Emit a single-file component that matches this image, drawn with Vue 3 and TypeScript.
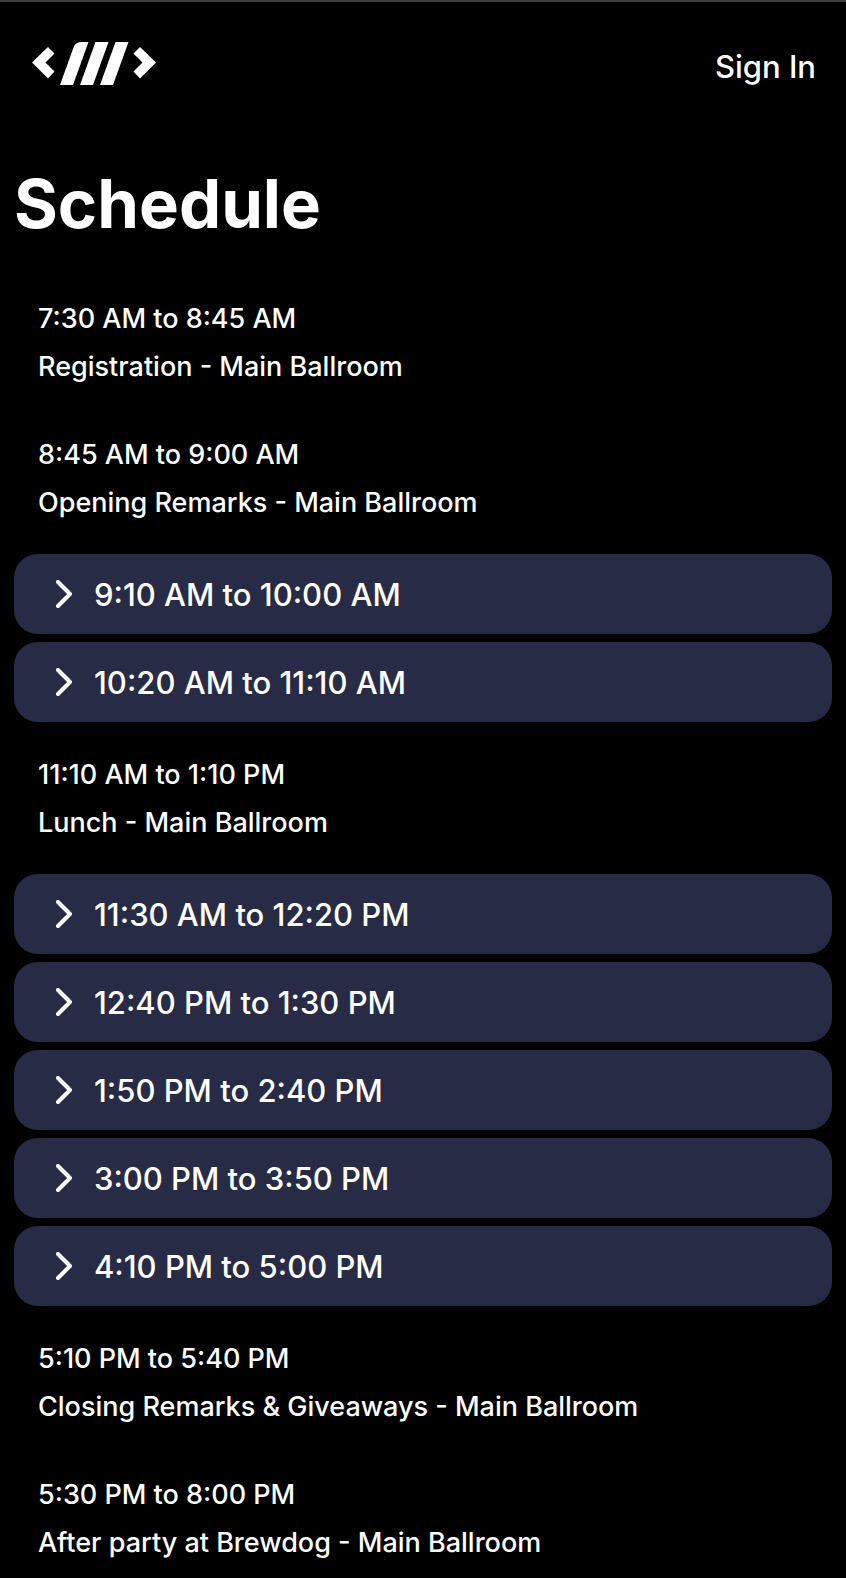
<script setup lang="ts">
import { ref } from 'vue'

interface Slot {
  time: string
  title?: string
}

interface Block {
  kind: 'event' | 'sessions'
  slots: Slot[]
}

const blocks: Block[] = [
  {
    kind: 'event',
    slots: [
      { time: '7:30 AM to 8:45 AM', title: 'Registration - Main Ballroom' },
      { time: '8:45 AM to 9:00 AM', title: 'Opening Remarks - Main Ballroom' },
    ],
  },
  { kind: 'sessions', slots: [{ time: '9:10 AM to 10:00 AM' }, { time: '10:20 AM to 11:10 AM' }] },
  { kind: 'event', slots: [{ time: '11:10 AM to 1:10 PM', title: 'Lunch - Main Ballroom' }] },
  {
    kind: 'sessions',
    slots: [
      { time: '11:30 AM to 12:20 PM' },
      { time: '12:40 PM to 1:30 PM' },
      { time: '1:50 PM to 2:40 PM' },
      { time: '3:00 PM to 3:50 PM' },
      { time: '4:10 PM to 5:00 PM' },
    ],
  },
  {
    kind: 'event',
    slots: [
      { time: '5:10 PM to 5:40 PM', title: 'Closing Remarks & Giveaways - Main Ballroom' },
      { time: '5:30 PM to 8:00 PM', title: 'After party at Brewdog - Main Ballroom' },
    ],
  },
]

const open = ref<string | null>(null)

function toggle(time: string): void {
  open.value = open.value === time ? null : time
}
</script>

<template>
  <div class="page">
    <header class="header">
      <a class="logo" href="#" aria-label="Home">
        <svg width="124" height="44" viewBox="0 0 124 44" fill="#fff" aria-hidden="true">
          <path d="M16 5 22.500 11.500 13.500 20.500 22.500 29.500 16 36.500 0 20.500Z" />
          <path d="M28 43 41.500 5.500Q43.500 0 49.500 0H56.500L41 43Z" />
          <path d="M48 43 63.500 0H76.500L61 43Z" />
          <path d="M68 43 83.500 0H96.500L81 43Z" />
          <path d="M108 5 124 20.500 108 36.500 101.500 29.500 110.500 20.500 101.500 11.500Z" />
        </svg>
      </a>
      <a class="sign-in" href="#">Sign In</a>
    </header>

    <main class="main">
      <h1 class="title">Schedule</h1>
      <section v-for="(block, index) in blocks" :key="index" :class="block.kind">
        <template v-for="slot in block.slots" :key="slot.time">
          <div v-if="block.kind === 'event'" class="entry">
            <p>{{ slot.time }}</p>
            <p>{{ slot.title }}</p>
          </div>
          <button
            v-else
            class="session"
            type="button"
            :aria-expanded="open === slot.time"
            @click="toggle(slot.time)"
          >
            <svg
              class="chevron"
              :class="{ turned: open === slot.time }"
              width="18"
              height="28"
              viewBox="0 0 18 28"
              fill="none"
              stroke="#fff"
              stroke-width="4"
              stroke-linecap="round"
              stroke-linejoin="round"
              aria-hidden="true"
            >
              <path d="M2 2 14 14 2 26" />
            </svg>
            <span>{{ slot.time }}</span>
          </button>
        </template>
      </section>
    </main>
  </div>
</template>

<style>
body {
  background: #000;
}
</style>

<style scoped>
.page {
  border-top: 2px solid #3c3c3c;
  background: #000;
  color: #fff;
  font-family: Inter, 'Liberation Sans', sans-serif;
  font-weight: 450;
}

.header {
  display: flex;
  align-items: flex-start;
  justify-content: space-between;
  padding: 40px 30px 38px 32px;
}

.logo {
  display: flex;
}

.sign-in {
  color: inherit;
  font-size: 31px;
  line-height: 50px;
  text-decoration: none;
}

.main {
  padding: 0 14px;
}

.title {
  margin: 0;
  padding: 30px 0 26px;
  font-size: 67px;
  font-weight: 700;
  line-height: 88px;
}

.entry {
  padding: 21px 24px 19px;
}

.event:last-child .entry:last-child {
  padding-bottom: 11px;
}

.entry p {
  margin: 0;
  font-size: 27px;
  line-height: 48px;
}

.sessions {
  display: flex;
  flex-direction: column;
  gap: 8px;
  padding: 8px 0;
}

.session {
  display: flex;
  align-items: center;
  gap: 20px;
  min-height: 80px;
  padding: 16px 42px;
  border: 0;
  border-radius: 24px;
  background: #282b45;
  color: inherit;
  font-family: inherit;
  font-size: 31px;
  font-weight: inherit;
  text-align: left;
  cursor: pointer;
}

.session span {
  padding-top: 2px;
  line-height: 46px;
}

.chevron {
  flex: none;
}

.chevron.turned {
  transform: rotate(90deg);
}
</style>
